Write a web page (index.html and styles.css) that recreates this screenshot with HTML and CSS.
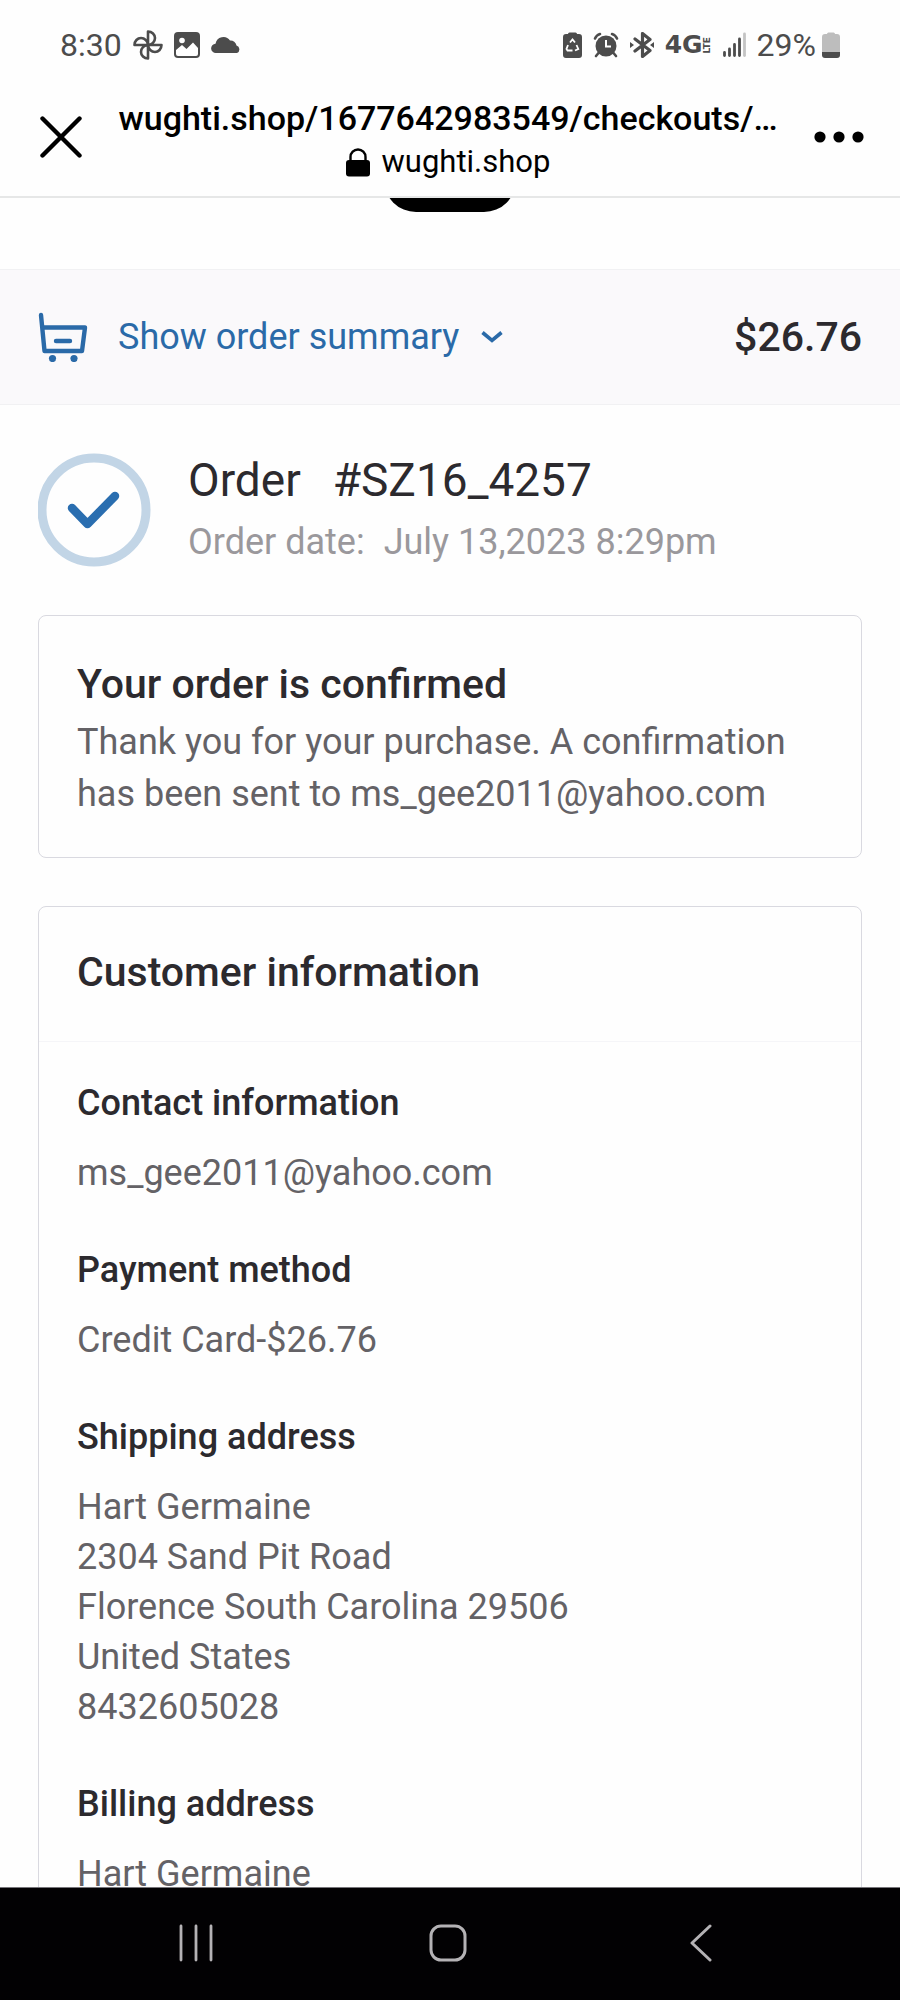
FILE: index.html
```html
<!DOCTYPE html>
<html lang="en">
<head>
   <meta charset="UTF-8">
   <meta name="viewport" content="width=device-width, initial-scale=1">
   <title>wughti.shop</title>
   <link rel="stylesheet" href="styles.css">
</head>

<body>

<div class="status">
   <div class="status-left">
      <span class="time">8:30</span>
      <svg width="30" height="30" viewBox="0 0 30 30" fill="none" stroke="#4c4c4c" stroke-width="2.6" stroke-linejoin="round">
         <path d="M15 15V1.500c4 0 7 3 7 6.500 0 3.500-3 7-7 7z"/>
         <path d="M15 15h13.500c0 4-3 7-6.500 7-3.500 0-7-3-7-7z"/>
         <path d="M15 15v13.500c-4 0-7-3-7-6.500 0-3.500 3-7 7-7z"/>
         <path d="M15 15H1.500c0-4 3-7 6.500-7 3.500 0 7 3 7 7z"/>
      </svg>
      <svg width="26" height="26" viewBox="0 0 26 26">
         <rect width="26" height="26" rx="4" fill="#4c4c4c"/>
         <circle cx="8" cy="8.500" r="2.800" fill="#fff"/>
         <path d="M2 18l6-5 4.500 4L19 10.500l5 5.500v6a2 2 0 0 1-2 2H4a2 2 0 0 1-2-2z" fill="#fff"/>
      </svg>
      <svg width="30" height="18" viewBox="0 0 30 18" fill="#4c4c4c">
         <path d="M5 17a4.600 4.600 0 0 1-.5-9.200A8 8 0 0 1 19 4.500a6 6 0 0 1 6.500 5A4 4 0 0 1 26 17z"/>
      </svg>
   </div>
   <div class="status-right">
      <svg width="19" height="26" viewBox="0 0 19 26">
         <path d="M5 2a1.500 1.500 0 0 1 1.500-1.500h6A1.500 1.500 0 0 1 14 2h2a3 3 0 0 1 3 3v18a3 3 0 0 1-3 3H3a3 3 0 0 1-3-3V5a3 3 0 0 1 3-3z" fill="#4c4c4c"/>
         <path d="M7 10.500l2.500-3 2.500 3M13.500 13l1.800 4-3.300 1.500M9.500 18.500H4.500l-1-1.500 1.500-4" fill="none" stroke="#fff" stroke-width="1.800"/>
      </svg>
      <svg width="26" height="26" viewBox="0 0 26 26">
         <circle cx="13" cy="14" r="10.500" fill="#4c4c4c"/>
         <path d="M2 6.500q1.500-3.500 5-4.500M24 6.500Q22.500 3 19 2M5.500 21L3 24M20.500 21l2.500 3" fill="none" stroke="#4c4c4c" stroke-width="2.600" stroke-linecap="round"/>
         <path d="M13 8v6.500h5" fill="none" stroke="#fff" stroke-width="2"/>
      </svg>
      <svg width="24" height="26" viewBox="0 0 24 26" fill="none" stroke="#4c4c4c" stroke-width="3.200" stroke-linejoin="round" stroke-linecap="round">
         <path d="M5 7l15 11.500-7.500 6v-23l7.500 6L5 19"/>
         <path d="M0 10v6l4-3zM24 10v6l-4-3z" fill="#4c4c4c" stroke="none"/>
      </svg>
      <span class="network">4G<span class="lte">LTE</span></span>
      <svg width="23" height="26" viewBox="0 0 23 26" stroke="#4c4c4c" stroke-width="2.800" stroke-linecap="round">
         <path d="M1.500 20.500v3M6.500 17v6.500M11.500 12.500v11M16.500 7v16.500"/>
         <path d="M21.500 2v21.500" stroke="#c4c4c4"/>
      </svg>
      <span class="percent">29%</span>
      <svg width="18" height="26" viewBox="0 0 18 26">
         <path d="M5 2a1.500 1.500 0 0 1 1.500-1.500h5A1.500 1.500 0 0 1 13 2h2a3 3 0 0 1 3 3v15H0V5a3 3 0 0 1 3-3z" fill="#bdbdbd"/>
         <path d="M0 20h18v3a3 3 0 0 1-3 3H3a3 3 0 0 1-3-3z" fill="#4c4c4c"/>
      </svg>
   </div>
</div>

<header class="browser">
   <button class="icon-button" type="button" aria-label="Close">
      <svg width="42" height="42" viewBox="0 0 42 42" stroke="#000" stroke-width="4.400" stroke-linecap="round">
         <path d="M2.500 2.500l37 37M39.500 2.500l-37 37"/>
      </svg>
   </button>
   <div class="location">
      <div class="url">wughti.shop/1677642983549/checkouts/…</div>
      <div class="host">
         <svg width="24" height="29" viewBox="0 0 24 29">
            <path d="M4.500 14V9a7.500 7.500 0 0 1 15 0v5" fill="none" stroke="#000" stroke-width="2.400"/>
            <rect y="12" width="24" height="16.500" rx="3" fill="#000"/>
         </svg>
         wughti.shop
      </div>
   </div>
   <button class="icon-button" type="button" aria-label="More options">
      <svg width="50" height="12" viewBox="0 0 50 12">
         <circle cx="6" cy="6" r="5.600"/>
         <circle cx="25" cy="6" r="5.600"/>
         <circle cx="44" cy="6" r="5.600"/>
      </svg>
   </button>
</header>

<main class="page">
   <div class="top">
      <button class="pill" type="button" aria-label="Home"></button>
   </div>

   <div class="summary">
      <button class="summary-toggle" type="button">
         <svg width="50" height="50" viewBox="0 0 50 50" fill="none" stroke="#2a6aa8" stroke-width="4.400" stroke-linecap="round" stroke-linejoin="round">
            <path d="M3 3l3.500 36H44l3-23.500H5M18 29h14"/>
            <circle cx="14.500" cy="46.500" r="3.600" fill="#2a6aa8" stroke="none"/>
            <circle cx="36" cy="46.500" r="3.600" fill="#2a6aa8" stroke="none"/>
         </svg>
         <span>Show order summary</span>
         <svg class="chevron" width="22" height="13" viewBox="0 0 22 13" fill="none" stroke="#2a6aa8" stroke-width="3.600">
            <path d="M1.500 1.500L11 9.500l9.500-8"/>
         </svg>
      </button>
      <span class="total">$26.76</span>
   </div>

   <div class="content">
      <div class="order">
         <svg width="114" height="114" viewBox="0 0 114 114" fill="none">
            <circle cx="56" cy="57" r="52" stroke="#c2d5e6" stroke-width="9"/>
            <path d="M34 55l15.500 16L77 43" stroke="#2a6eb0" stroke-width="8.500" stroke-linecap="round" stroke-linejoin="round"/>
         </svg>
         <div class="order-text">
            <h1><span>Order</span><span>#SZ16_4257</span></h1>
            <p><span>Order date:</span><span>July 13,2023 8:29pm</span></p>
         </div>
      </div>

      <section class="card confirmed">
         <h2>Your order is confirmed</h2>
         <p>Thank you for your purchase. A confirmation has been sent to ms_gee2011@yahoo.com</p>
      </section>

      <section class="card">
         <h2 class="card-title">Customer information</h2>
         <div class="info">
            <div>
               <h3>Contact information</h3>
               <p>ms_gee2011@yahoo.com</p>
            </div>
            <div>
               <h3>Payment method</h3>
               <p>Credit Card-$26.76</p>
            </div>
            <div>
               <h3>Shipping address</h3>
               <p>Hart Germaine<br>2304 Sand Pit Road<br>Florence South Carolina 29506<br>United States<br>8432605028</p>
            </div>
            <div>
               <h3>Billing address</h3>
               <p>Hart Germaine</p>
            </div>
         </div>
      </section>
   </div>
</main>

<nav class="system">
   <button type="button" aria-label="Recent apps">
      <svg width="38" height="38" viewBox="0 0 38 38" stroke="#b4b2b5" stroke-width="2.800" stroke-linecap="round">
         <path d="M4 2v34M19 2v34M34 2v34"/>
      </svg>
   </button>
   <button type="button" aria-label="Home">
      <svg width="38" height="38" viewBox="0 0 38 38" fill="none" stroke="#b4b2b5" stroke-width="3">
         <rect x="2" y="2" width="34" height="34" rx="10"/>
      </svg>
   </button>
   <button type="button" aria-label="Back">
      <svg width="38" height="38" viewBox="0 0 38 38" fill="none" stroke="#b4b2b5" stroke-width="3" stroke-linecap="round" stroke-linejoin="round">
         <path d="M28 2L10 19l18 17"/>
      </svg>
   </button>
</nav>

</body>
</html>
```
FILE: styles.css
```css
html {
   height: 100%;
}

body {
   display: flex;
   flex-direction: column;
   height: 100%;
   margin: 0;
   overflow: hidden;
   background: #fefefe;
   color: #2c2a2e;
   font-family: Roboto, sans-serif;
   font-size: 36px;
   line-height: 50px;
}

h1, h2, h3, p {
   margin: 0;
}

h2, h3 {
   font-weight: 500;
}

button {
   border: 0;
   padding: 0;
   background: none;
   color: inherit;
   font: inherit;
   cursor: pointer;
}

svg {
   display: block;
   flex: none;
}

/* phone status bar */
.status {
   display: flex;
   justify-content: space-between;
   align-items: center;
   flex: none;
   height: 90px;
   padding: 0 60px;
   color: #4c4c4c;
   font-size: 32px;
}

.status-left, .status-right {
   display: flex;
   align-items: center;
   gap: 11px;
}

.percent {
   margin-right: -5px;
}

.network {
   display: flex;
   align-items: center;
   font: bold 25px/26px "DejaVu Sans", sans-serif;
}

.lte {
   writing-mode: vertical-rl;
   transform: rotate(180deg);
   font-size: 9px;
   line-height: 9px;
}

/* in-app browser header */
.browser {
   display: flex;
   align-items: flex-start;
   justify-content: space-between;
   flex: none;
   padding: 7px 36px 13px 40px;
   border-bottom: 2px solid #e6e7e7;
   color: #000;
}

.icon-button {
   display: flex;
   align-items: center;
   height: 80px;
}

.location {
   display: flex;
   flex-direction: column;
   align-items: center;
   gap: 2px;
   min-width: 0;
   line-height: 42px;
}

.url {
   font-size: 34px;
   font-weight: 500;
}

.host {
   display: flex;
   align-items: center;
   gap: 12px;
   font-size: 31px;
}

/* page */
.page {
   flex: 1;
   min-height: 0;
   overflow: hidden;
}

.top {
   display: flex;
   justify-content: center;
   align-items: flex-start;
   height: 71px;
}

.pill {
   width: 132px;
   height: 64px;
   margin-top: -50px;
   border-radius: 32px;
   background: #000;
}

.summary {
   display: flex;
   align-items: center;
   justify-content: space-between;
   padding: 42px 38px;
   border: solid #f1f1f3;
   border-width: 1px 0;
   background: #faf9fb;
}

.summary-toggle {
   display: flex;
   align-items: center;
   gap: 30px;
   color: #2a6aa8;
}

.chevron {
   margin-left: -8px;
}

.total {
   font-size: 41px;
   font-weight: 500;
}

.content {
   padding: 48px 38px;
}

.order {
   display: flex;
   align-items: center;
   gap: 36px;
}

.order h1, .order p {
   display: flex;
}

.order h1 {
   gap: 32px;
   margin-bottom: 10px;
   font-size: 46px;
   font-weight: 400;
   line-height: 54px;
}

.order p {
   gap: 19px;
   color: #9a989c;
}

.card {
   margin-top: 48px;
   border: 1px solid #d9d9e0;
   border-radius: 8px;
}

.card h2 {
   font-size: 41px;
}

.card p {
   color: #646266;
}

.confirmed {
   padding: 43px 38px 37px;
}

.confirmed p {
   margin-top: 7px;
   line-height: 52px;
}

.card-title {
   padding: 40px 38px 44px;
   border-bottom: 1px solid #f5f5f8;
}

.info {
   display: flex;
   flex-direction: column;
   gap: 47px;
   padding: 36px 38px;
}

.info h3 {
   margin-bottom: 20px;
   font-size: 36px;
}

/* phone navigation */
.system {
   display: flex;
   justify-content: space-around;
   align-items: center;
   flex: none;
   height: 110px;
   padding: 0 73px 2px 70px;
   border-top: 1px solid #77757a;
   background: #020103;
}
```
